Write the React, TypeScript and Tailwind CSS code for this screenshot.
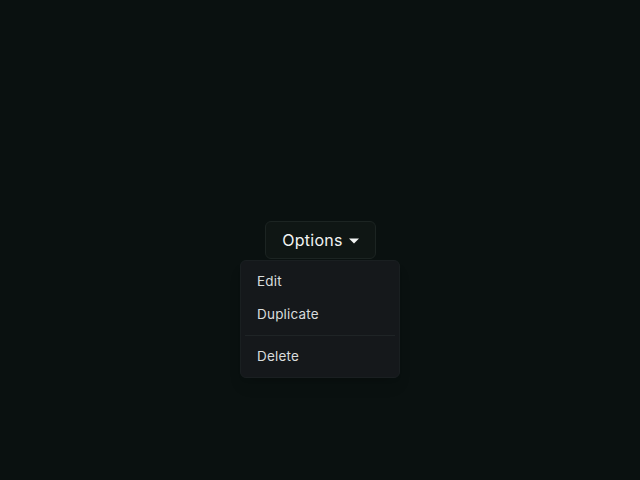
import React, { useState } from "react";

const items = ["Edit", "Duplicate"];

const OptionsMenu = () => {
  const [open, setOpen] = useState(true);

  return (
    <div className="relative">
      <button
        type="button"
        onClick={() => setOpen(!open)}
        className="flex h-[38px] w-[111px] items-center justify-center gap-[6px] rounded-md border border-[#1c2422] bg-[#0f1614] pl-[1px] text-[16px] tracking-[0.3px] text-[#f2f4f3]"
      >
        <span>Options</span>
        <svg width="10" height="6" viewBox="0 0 10 6" className="mt-[1px]">
          <path d="M0 0.5h10L5 5.5z" fill="#f2f4f3" />
        </svg>
      </button>

      {open && (
        <div className="absolute left-1/2 top-[39px] w-40 -translate-x-1/2 rounded-md border border-[#1a1f21] bg-[#15181b] p-1 text-[13.5px] tracking-[0.2px] text-[#d9dcdd] shadow-lg">
          {items.map((item) => (
            <div key={item} className="flex h-[33px] items-center rounded px-3">
              {item}
            </div>
          ))}
          <div className="my-1 h-px bg-[#1f2426]" />
          <div className="flex h-[33px] items-center rounded px-3">Delete</div>
        </div>
      )}
    </div>
  );
};

export default function App() {
  return (
    <div
      className="flex h-[480px] w-full items-center justify-center bg-[#0a1110]"
      style={{ fontFamily: "Inter, 'Noto Sans', sans-serif" }}
    >
      <OptionsMenu />
    </div>
  );
}
